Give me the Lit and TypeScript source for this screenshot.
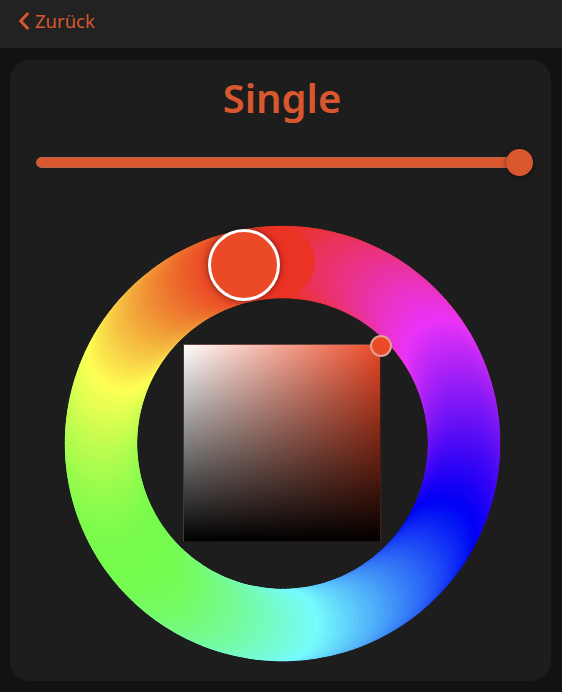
import { LitElement, html, svg, css } from "lit";
import { customElement } from "lit/decorators.js";

const SIZE = 436;
const MID = 181.5;
const STROKE = 73;
const STEPS = 256;

function hueColor(hue: number): string {
  const channel = (n: number) => {
    const k = (n + hue / 60) % 6;
    return 1 - Math.max(0, Math.min(k, 4 - k, 1));
  };
  const lin = (v: number) => (v <= 0.04045 ? v / 12.92 : ((v + 0.055) / 1.055) ** 2.4);
  const enc = (v: number) => Math.round(255 * (v <= 0.0031308 ? v * 12.92 : 1.055 * v ** (1 / 2.4) - 0.055));
  const [r, g, b] = [channel(5), channel(3), channel(1)].map(lin);
  return `rgb(${enc(0.8225 * r + 0.1774 * g)},${enc(0.0332 * r + 0.9669 * g)},${enc(0.0171 * r + 0.0724 * g + 0.9108 * b)})`;
}

@customElement("color-wheel")
export class ColorWheel extends LitElement {
  static styles = css`
    :host { display: block; position: relative; width: 436px; height: 436px; }
    .ring { display: block; overflow: visible; }
    .area {
      position: absolute; left: 118px; top: 119px; width: 198px; height: 198px;
      box-sizing: border-box; border: 1px solid;
      border-color: #6b4640 #451f17 #21130f #4a3835;
      background:
        linear-gradient(to bottom, transparent, #000) padding-box,
        linear-gradient(to right, #fff, #ea4826) padding-box;
    }
    .handle { position: absolute; box-sizing: border-box; border-radius: 50%; background: #ec4a26; }
    .hue { left: 143px; top: 4px; width: 72px; height: 72px; border: 3px solid #fff; box-shadow: 0 0 7px rgba(0,0,0,.5); }
    .tone { left: 305px; top: 110px; width: 22px; height: 22px; border: 2px solid #e1a195; }
  `;

  render() {
    const c = SIZE / 2;
    const dots = Array.from({ length: STEPS }, (_, i) => {
      const a = (i * 2 * Math.PI) / STEPS;
      const hue = Math.max(0, Math.min(360, 360 * (1 - (i - 0.5) / (STEPS - 1.5))));
      return svg`<circle cx=${(c - 0.5 + MID * Math.sin(a)).toFixed(2)} cy=${(c + 0.5 - MID * Math.cos(a)).toFixed(2)} r=${STROKE / 2 - 0.2} fill=${hueColor(hue)} />`;
    });
    return html`
      <svg class="ring" width=${SIZE} height=${SIZE} viewBox="0 0 436 436">${dots}</svg>
      <div class="area"></div>
      <div class="handle hue"></div>
      <div class="handle tone"></div>
    `;
  }
}

@customElement("app-root")
export class AppRoot extends LitElement {
  static styles = css`
    :host {
      display: flex; flex-direction: column; height: 692px; overflow: hidden;
      background: #121212; color: #d9572f; font-family: "Noto Sans", sans-serif;
    }
    header { flex: none; height: 48px; box-sizing: border-box; padding: 0 0 6px 19px; background: #222; display: flex; align-items: center; }
    .back { display: flex; align-items: center; gap: 6px; font-size: 18.5px; line-height: 24px; }
    .card { margin: 12px 11px 0 10px; height: 621px; box-sizing: border-box; border-radius: 20px; background: #1d1d1d; display: flex; flex-direction: column; }
    h1 { margin: 10px 0 0 3px; text-align: center; font-size: 40px; line-height: 56px; font-weight: 600; }
    .slider { margin: 23px 18px 0 26px; height: 27px; display: flex; align-items: center; }
    .track { flex: 1; height: 11px; box-sizing: border-box; border-radius: 6px; background: #d9572f; border: 1px solid #b8674d; margin-right: -27px; }
    .thumb { position: relative; width: 27px; height: 27px; border-radius: 50%; background: #d9572f; box-shadow: 0 1px 5px rgba(0,0,0,.5); }
    color-wheel { margin: 49px 0 0 55px; }
  `;

  render() {
    return html`
      <header>
        <div class="back">
          <svg width="10" height="18" viewBox="0 0 10 18" fill="none" stroke="currentColor" stroke-width="2.9" stroke-linecap="round" stroke-linejoin="round"><path d="M8.5 1.8 1.7 9l6.8 7.2" /></svg>
          <span>Zurück</span>
        </div>
      </header>
      <section class="card">
        <h1>Single</h1>
        <div class="slider"><div class="track"></div><div class="thumb"></div></div>
        <color-wheel></color-wheel>
      </section>
    `;
  }
}
